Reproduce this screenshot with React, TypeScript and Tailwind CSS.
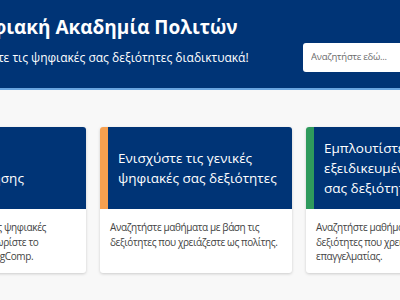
import { Search } from 'lucide-react';

type Card = {
  id: string;
  accent: string;
  title: string;
  text: string;
};

const cards: Card[] = [
  {
    id: 'self',
    accent: 'bg-[#4c9bd9]',
    title: 'Το εργαλείο\nαυτοαξιολόγησης',
    text: 'Αξιολογήστε άμεσα τις ψηφιακές\nσας δεξιότητες και γνωρίστε το\nευρωπαϊκό πλαίσιο DigComp.',
  },
  {
    id: 'general',
    accent: 'bg-[#f7a04f]',
    title: 'Ενισχύστε τις γενικές ψηφιακές σας δεξιότητες',
    text: 'Αναζητήστε μαθήματα με βάση τις δεξιότητες που χρειάζεστε ως πολίτης.',
  },
  {
    id: 'pro',
    accent: 'bg-[#2e9a5c]',
    title: 'Εμπλουτίστε τις εξειδικευμένες ψηφιακές σας δεξιότητες',
    text: 'Αναζητήστε μαθήματα με βάση τις δεξιότητες που χρειάζεστε ως επαγγελματίας.',
  },
];

export default function App() {
  return (
    <div
      className="w-[400px] h-[300px] overflow-hidden bg-[#f8f8f8]"
      style={{ fontFamily: '"Open Sans", "Noto Sans", sans-serif' }}
    >
      <header className="bg-[#003476] h-[90px] border-b-2 border-[#69a5e0] flex items-start">
        <div className="flex-1 min-w-0 pt-[15px] whitespace-nowrap">
          <h1 className="text-white text-[19px] font-bold leading-[24px] -ml-[38px]">
            Ψηφιακή Ακαδημία Πολιτών
          </h1>
          <p className="text-white text-[12px] leading-[18px] mt-[10px] -ml-[50px]">
            Αναπτύξτε τις ψηφιακές σας δεξιότητες διαδικτυακά!
          </p>
        </div>
        <div className="mt-[43px] w-[140px] -mr-[43px] shrink-0 h-[29px] bg-white rounded-[3px] flex items-center pl-[8px] pr-[8px]">
          <input
            placeholder="Αναζητήστε εδώ..."
            className="w-full text-[9.5px] tracking-[-0.25px] text-[#333] placeholder:text-[#6b6b6b] outline-none bg-transparent"
          />
          <Search className="w-[14px] h-[14px] text-[#003476] shrink-0" />
        </div>
      </header>

      <div className="flex gap-[14px] -ml-[106px] mt-[37px]">
        {cards.map((c) => (
          <div
            key={c.id}
            className="w-[192px] shrink-0 bg-white rounded-[3px] overflow-hidden shadow-[0_1px_3px_rgba(0,0,0,0.18)] flex flex-col"
          >
            <div className="flex h-[82px]">
              <div className={`w-[8px] shrink-0 ${c.accent}`} />
              <div className="flex-1 bg-[#003476] flex items-center px-[10px]">
                <h2 className="text-white text-[13.5px] leading-[20px] whitespace-pre-line">
                  {c.title}
                </h2>
              </div>
            </div>
            <div className="h-[64px] px-[10px] pt-[11px] pb-[8px]">
              <p className="text-[#444] text-[10px] tracking-[-0.4px] leading-[14.5px] whitespace-pre-line">
                {c.text}
              </p>
            </div>
          </div>
        ))}
      </div>
    </div>
  );
}
